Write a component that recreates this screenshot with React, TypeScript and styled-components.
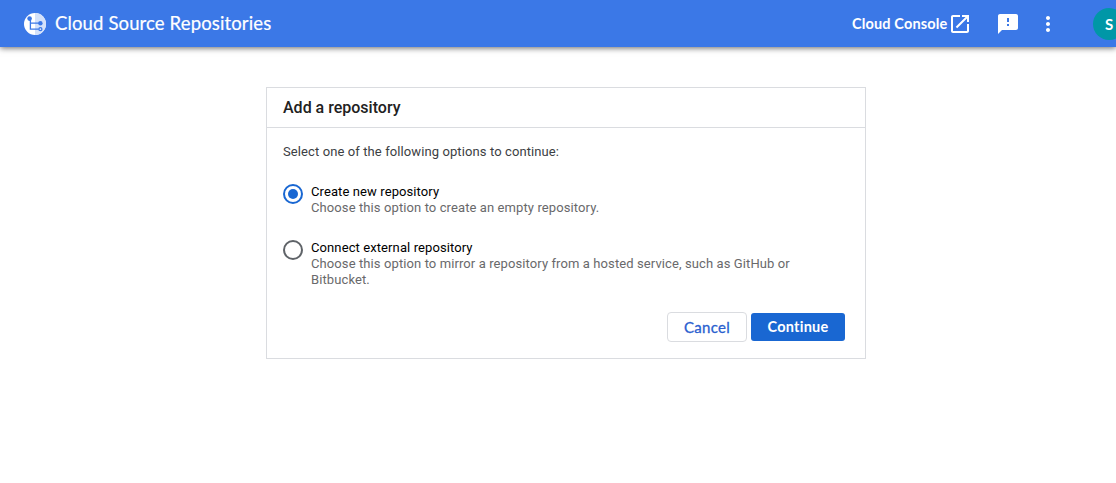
import React, { useState } from "react";
import styled, { createGlobalStyle } from "styled-components";

const GlobalStyle = createGlobalStyle`
  *, *::before, *::after { box-sizing: border-box; }
  body {
    margin: 0;
    background: #fff;
    font-family: Roboto, "Liberation Sans", sans-serif;
    overflow: hidden;
  }
`;

const brandFont = `Lato, "Open Sans", sans-serif`;

const Header = styled.header`
  display: flex;
  align-items: center;
  height: 47px;
  padding-left: 24px;
  background: #3b78e7;
  color: #fff;
  box-shadow: 0 1px 6px rgba(0, 0, 0, 0.6);
  font-family: ${brandFont};
`;

const Brand = styled.div`
  display: flex;
  align-items: center;
  gap: 9px;
  flex: 1;
`;

const Title = styled.h1`
  margin: 0;
  padding-bottom: 1px;
  font-size: 18.5px;
  font-weight: 400;
  line-height: 24px;
  letter-spacing: 0.13px;
  white-space: nowrap;
  -webkit-text-stroke: 0.2px currentColor;
`;

const Actions = styled.div`
  display: flex;
  align-items: center;
  flex: none;
  width: 264px;
`;

const ConsoleLink = styled.a`
  display: flex;
  align-items: center;
  flex: none;
  width: 144px;
  color: inherit;
  font-size: 14.5px;
  font-weight: 700;
  line-height: 20px;
  letter-spacing: 0.15px;
  white-space: nowrap;
`;

const LinkText = styled.span`
  flex: none;
  width: 96px;
`;

const Icon = styled.svg<{ $size: number }>`
  display: block;
  flex: none;
  width: ${(p) => p.$size}px;
  height: ${(p) => p.$size}px;
  fill: currentColor;
`;

const IconButton = styled.button<{ $width: number }>`
  display: flex;
  align-items: center;
  flex: none;
  width: ${(p) => p.$width}px;
  padding: 0;
  border: 0;
  background: none;
  color: inherit;
`;

const Avatar = styled.div`
  display: flex;
  align-items: center;
  justify-content: center;
  flex: none;
  width: 32px;
  height: 32px;
  border-radius: 50%;
  background: #0097a7;
  font-size: 15px;
  font-weight: 700;
`;

const Card = styled.main`
  width: 600px;
  height: 272px;
  margin: 40px 0 0 266px;
  border: 1px solid #dadce0;
`;

const CardTitle = styled.h2`
  height: 40px;
  margin: 0;
  padding: 0 16px;
  border-bottom: 1px solid #dadce0;
  color: #212121;
  font-size: 16px;
  font-weight: 500;
  line-height: 39px;
`;

const CardBody = styled.div`
  padding: 16px 20px 0 16px;
  font-size: 13px;
  line-height: 16px;
`;

const Intro = styled.p`
  margin: 0 0 24px;
  color: #3c4043;
  letter-spacing: 0.1px;
`;

const Option = styled.label`
  display: flex;
  gap: 8px;
  margin-bottom: 24px;
  letter-spacing: 0.1px;
`;

const Radio = styled.input`
  appearance: none;
  display: grid;
  place-items: center;
  flex: none;
  width: 20px;
  height: 20px;
  margin: 0;
  border: 2px solid #5f6368;
  border-radius: 50%;

  &:checked { border-color: #1967d2; }
  &:checked::before {
    content: "";
    width: 10px;
    height: 10px;
    border-radius: 50%;
    background: #1967d2;
  }
`;

const OptionText = styled.div`
  width: 490px;
`;

const OptionName = styled.div`
  color: #000;
`;

const OptionHint = styled.div`
  color: #69696b;
`;

const Buttons = styled.div`
  display: flex;
  justify-content: flex-end;
  align-items: center;
  gap: 4px;
`;

const Button = styled.button<{ $primary?: boolean }>`
  width: ${(p) => (p.$primary ? 94 : 80)}px;
  height: ${(p) => (p.$primary ? 28 : 30)}px;
  padding: 0;
  border: ${(p) => (p.$primary ? "0" : "1px solid #dadce0")};
  border-radius: ${(p) => (p.$primary ? 3 : 4)}px;
  background: ${(p) => (p.$primary ? "#1967d2" : "#fff")};
  color: ${(p) => (p.$primary ? "#fff" : "#2a5fcf")};
  font-family: ${brandFont};
  font-size: ${(p) => (p.$primary ? 14.5 : 15)}px;
  font-weight: ${(p) => (p.$primary ? 700 : 400)};
  letter-spacing: ${(p) => (p.$primary ? 0.25 : 0.3)}px;
  line-height: 20px;
  -webkit-text-stroke: ${(p) => (p.$primary ? "0" : "0.3px currentColor")};
`;

const options = [
  {
    id: "create",
    name: "Create new repository",
    hint: "Choose this option to create an empty repository.",
  },
  {
    id: "connect",
    name: "Connect external repository",
    hint: "Choose this option to mirror a repository from a hosted service, such as GitHub or Bitbucket.",
  },
];

function Logo() {
  return (
    <Icon $size={22} viewBox="0 0 22 22">
      <circle cx="11" cy="11" r="11" fill="#fff" />
      <path d="M11 0a11 11 0 0 1 0 22z" fill="#d3e1fa" />
      <g fill="none" stroke="#3b78e7" strokeWidth="1.3">
        <path d="M6.4 6v10.2h8.3M6.4 10.2h10" />
        <circle cx="16.4" cy="16.2" r="1.5" />
      </g>
      <circle cx="5.6" cy="5.6" r="2.3" fill="#3b78e7" />
      <circle cx="16.4" cy="10.2" r="2.2" fill="#3b78e7" />
    </Icon>
  );
}

export default function App() {
  const [selected, setSelected] = useState("create");
  return (
    <>
      <GlobalStyle />
      <Header>
        <Brand>
          <Logo />
          <Title>Cloud Source Repositories</Title>
        </Brand>
        <Actions>
          <ConsoleLink>
            <LinkText>Cloud Console</LinkText>
            <Icon $size={24} viewBox="0 0 24 24">
              <path d="M19 19H5V5h7V3H5c-1.11 0-2 .9-2 2v14c0 1.1.89 2 2 2h14c1.1 0 2-.9 2-2v-7h-2v7zM14 3v2h3.59l-9.83 9.83 1.41 1.41L19 6.41V10h2V3h-7z" />
            </Icon>
          </ConsoleLink>
          <IconButton $width={40} aria-label="Send feedback">
            <Icon $size={24} viewBox="0 0 24 24">
              <path d="M20 2H4c-1.1 0-1.99.9-1.99 2L2 22l4-4h14c1.1 0 2-.9 2-2V4c0-1.1-.9-2-2-2zm-7 12h-2v-2h2v2zm0-4h-2V6h2v4z" />
            </Icon>
          </IconButton>
          <IconButton $width={57} aria-label="More options">
            <Icon $size={24} viewBox="0 0 24 24">
              <path d="M12 8c1.1 0 2-.9 2-2s-.9-2-2-2-2 .9-2 2 .9 2 2 2zm0 2c-1.1 0-2 .9-2 2s.9 2 2 2 2-.9 2-2-.9-2-2-2zm0 6c-1.1 0-2 .9-2 2s.9 2 2 2 2-.9 2-2-.9-2-2-2z" />
            </Icon>
          </IconButton>
          <Avatar>S</Avatar>
        </Actions>
      </Header>
      <Card>
        <CardTitle>Add a repository</CardTitle>
        <CardBody>
          <Intro>Select one of the following options to continue:</Intro>
          {options.map((o) => (
            <Option key={o.id}>
              <Radio
                type="radio"
                name="source"
                checked={selected === o.id}
                onChange={() => setSelected(o.id)}
              />
              <OptionText>
                <OptionName>{o.name}</OptionName>
                <OptionHint>{o.hint}</OptionHint>
              </OptionText>
            </Option>
          ))}
          <Buttons>
            <Button>Cancel</Button>
            <Button $primary>Continue</Button>
          </Buttons>
        </CardBody>
      </Card>
    </>
  );
}
